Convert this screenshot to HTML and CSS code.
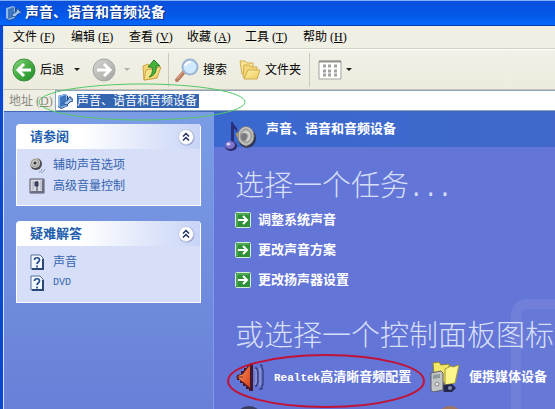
FILE: index.html
```html
<!DOCTYPE html>
<html lang="zh-CN">
<head>
  <meta charset="UTF-8">
  <meta name="viewport" content="width=device-width, initial-scale=1.0">
  <title>声音、语音和音频设备</title>
  <link rel="stylesheet" href="styles.css">
</head>
<body>
  <!-- shared icons -->
  <svg class="defs" aria-hidden="true">
    <defs>
      <linearGradient id="greenBall" x1="0" y1="0" x2="1" y2="1">
        <stop offset="0" stop-color="#8bd67c"/><stop offset=".5" stop-color="#45ad42"/><stop offset="1" stop-color="#218a2a"/>
      </linearGradient>
      <linearGradient id="greyBall" x1="0" y1="0" x2="1" y2="1">
        <stop offset="0" stop-color="#d6d6d2"/><stop offset="1" stop-color="#a3a3a0"/>
      </linearGradient>
      <linearGradient id="folderFill" x1="0" y1="0" x2="1" y2="1">
        <stop offset="0" stop-color="#fdf3a8"/><stop offset="1" stop-color="#eec95c"/>
      </linearGradient>
      <linearGradient id="orangeCone" x1="0" y1="0" x2="1" y2="1">
        <stop offset="0" stop-color="#ffc092"/><stop offset=".5" stop-color="#e8683a"/><stop offset="1" stop-color="#d4431c"/>
      </linearGradient>
      <radialGradient id="cone">
        <stop offset="0" stop-color="#666"/><stop offset=".4" stop-color="#ddd"/><stop offset=".7" stop-color="#9a9a94"/><stop offset="1" stop-color="#efefe8"/>
      </radialGradient>
    </defs>
    <symbol id="device" viewBox="0 0 16 16">
      <path d="M1 3l7-2 3 2v10l-7 3-3-2z" fill="#1f4a8c"/>
      <path d="M1 3l7-2 2 1v11l-6 2-3-2z" fill="#8fb9ea"/>
      <path d="M3 4l6-2v10l-6 2z" fill="#3f78c0"/>
      <path d="M7 9l4-2 1-3 2 0v2h2v2l-3 1-3 3-3-1z" fill="#9fc3ec" stroke="#2a5694"/>
    </symbol>
    <symbol id="go" viewBox="0 0 16 16">
      <rect x=".5" y=".5" width="15" height="15" rx="1" fill="#2f9038" stroke="#d2efd8"/>
      <path d="M2 14V2h12" fill="none" stroke="#6fbe70"/>
      <path d="M3 8h9M8 4l4 4-4 4" fill="none" stroke="#fff" stroke-width="2"/>
    </symbol>
    <symbol id="help" viewBox="0 0 14 16">
      <path d="M1 1h9l3 3v11H1z" fill="#f3f8ff" stroke="#536e98"/>
      <path d="M13 5v10H2" fill="none" stroke="#2c4878" stroke-width="2"/>
      <path d="M4.500 6c0-3 5-3 5 0 0 2-2.500 2-2.500 4M7 11.500v2" fill="none" stroke="#234b8c" stroke-width="1.700"/>
    </symbol>
    <symbol id="collapse" viewBox="0 0 18 18">
      <circle cx="9.500" cy="9.500" r="8" fill="#8d9cc6"/>
      <circle cx="9" cy="9" r="7.500" fill="#fff" stroke="#c3cce6"/>
      <path d="M6 8.500l3-3 3 3M6 12.500l3-3 3 3" fill="none" stroke="#1f2f5c" stroke-width="1.500"/>
    </symbol>
  </svg>

  <header class="titlebar">
    <svg class="icon16"><use href="#device"/></svg>
    <h1>声音、语音和音频设备</h1>
  </header>

  <div class="window">
    <nav class="menubar">
      <button>文件<span>(<u>F</u>)</span></button>
      <button>编辑<span>(<u>E</u>)</span></button>
      <button>查看<span>(<u>V</u>)</span></button>
      <button>收藏<span>(<u>A</u>)</span></button>
      <button>工具<span>(<u>T</u>)</span></button>
      <button>帮助<span>(<u>H</u>)</span></button>
    </nav>

    <div class="toolbar">
      <button class="back">
        <svg width="24" height="24" viewBox="0 0 24 24">
          <circle cx="12" cy="12" r="11" fill="url(#greenBall)" stroke="#3b8f40"/>
          <path d="M19 12H7M12 6l-6 6 6 6" fill="none" stroke="#fff" stroke-width="3"/>
        </svg>
        后退
        <i class="caret"></i>
      </button>
      <button class="forward" aria-label="前进" disabled>
        <svg width="24" height="24" viewBox="0 0 24 24">
          <circle cx="12" cy="12" r="11" fill="url(#greyBall)" stroke="#a5a5a2"/>
          <path d="M5 12h12M12 6l6 6-6 6" fill="none" stroke="#fff" stroke-width="3"/>
        </svg>
        <i class="caret"></i>
      </button>
      <button class="up" aria-label="向上">
        <svg width="20" height="24" viewBox="0 0 20 24">
          <path d="M1 8l5-2 2 2 7-1v13L2 22z" fill="#f3d774" stroke="#cda544"/>
          <path d="M4 12l15-3-4 11-13 2z" fill="url(#folderFill)" stroke="#cda544"/>
          <path d="M7 19c3-2 4-5 3-10H6l6-7 6 6h-4c1 6-2 10-7 11z" fill="#46b33c" stroke="#237f27"/>
        </svg>
      </button>
      <span class="sep"></span>
      <button class="search">
        <svg width="24" height="24" viewBox="0 0 24 24">
          <path d="M2 22l7-8" stroke="#b9795c" stroke-width="4" stroke-linecap="round"/>
          <path d="M2 21l6-7" stroke="#e6b79e" stroke-width="1"/>
          <circle cx="15" cy="9" r="7.500" fill="#cfeafc" stroke="#9db4d2" stroke-width="2"/>
          <path d="M10 8c1-3 4-4 6-4" fill="none" stroke="#fff" stroke-width="2"/>
        </svg>
        搜索
      </button>
      <button class="folders">
        <svg width="22" height="22" viewBox="0 0 22 22">
          <path d="M1 2h5l2 2h6v11H3z" fill="#f9e596" stroke="#d1ab4c"/>
          <path d="M4 18l1-12h5l2 2h6v11H6z" fill="#f4d778" stroke="#d1ab4c"/>
          <path d="M5 20l4-9h12l-3 9z" fill="url(#folderFill)" stroke="#d1ab4c"/>
        </svg>
        文件夹
      </button>
      <span class="sep"></span>
      <button class="views" aria-label="查看方式">
        <svg width="24" height="20" viewBox="0 0 24 20">
          <path d="M1 1h22v18H1z" fill="#fff" stroke="#a4a49c"/>
          <path d="M1 1.500h22" stroke="#93938c" stroke-width="2"/>
          <path d="M5 6h3M10 6h3M16 6h3M5 11h3M10 11h3M16 11h3M5 15h3M10 15h3M16 15h3" stroke="#a2a39e" stroke-width="3"/>
        </svg>
        <i class="caret"></i>
      </button>
    </div>

    <div class="addressbar">
      <label for="address">地址<span>(<u>D</u>)</span></label>
      <div class="address-box">
        <svg class="icon16"><use href="#device"/></svg>
        <input id="address" type="text" value="声音、语音和音频设备">
      </div>
      <svg class="mark mark-green" viewBox="0 0 208 38"><ellipse cx="104" cy="19" rx="103" ry="18"/></svg>
    </div>

    <div class="content">
      <aside class="sidebar">
        <section class="panel">
          <div class="panel-head">
            <h2>请参阅</h2>
            <button aria-label="折叠"><svg width="18" height="18"><use href="#collapse"/></svg></button>
          </div>
          <ul>
            <li><a href="#">
              <svg class="icon16" viewBox="0 0 16 16">
                <ellipse cx="7" cy="7" rx="6" ry="6" fill="#4c4c50"/>
                <ellipse cx="6" cy="6" rx="5" ry="5" fill="url(#cone)"/>
                <circle cx="6" cy="6" r="1.500" fill="#333"/>
                <path d="M10 15c2 0 3-2 3-3M12 16c2 0 3-2 4-4" fill="none" stroke="#8795b6"/>
              </svg>
              辅助声音选项</a></li>
            <li><a href="#">
              <svg class="icon16" viewBox="0 0 16 16">
                <path d="M1 1h14v14H1z" fill="#d9d9e2" stroke="#4e5368"/>
                <path d="M14 2v12H2" fill="none" stroke="#6d6d80" stroke-width="2"/>
                <path d="M4 3v9M12 3v9" stroke="#a9acbc"/>
                <path d="M8 3v10M6 4h3v4H6z" fill="#474d68" stroke="#333a58"/>
              </svg>
              高级音量控制</a></li>
          </ul>
        </section>

        <section class="panel">
          <div class="panel-head">
            <h2>疑难解答</h2>
            <button aria-label="折叠"><svg width="18" height="18"><use href="#collapse"/></svg></button>
          </div>
          <ul>
            <li><a href="#"><svg class="icon16"><use href="#help"/></svg>声音</a></li>
            <li><a href="#"><svg class="icon16"><use href="#help"/></svg><span class="latin">DVD</span></a></li>
          </ul>
        </section>
      </aside>

      <main>
        <div class="category">
          <svg width="32" height="32" viewBox="0 0 32 32">
            <ellipse cx="23" cy="17" rx="9" ry="10" fill="#2f3552"/>
            <path d="M12 13l7-6 4 19-8-5z" fill="#dba63e"/>
            <ellipse cx="22" cy="15" rx="8" ry="9.500" fill="url(#cone)" stroke="#77797f"/>
            <ellipse cx="20" cy="16" rx="3" ry="4" fill="#7b7c80"/>
            <path d="M9 1c1 5 6 5 4 11-1-4-3-4-3-4v15H7V1z" fill="#28307c"/>
            <ellipse cx="7" cy="25" rx="6" ry="5" fill="#2c2a66"/>
            <ellipse cx="6" cy="24" rx="5" ry="4" fill="#7b72cf"/>
            <ellipse cx="4.500" cy="23" rx="2" ry="1.500" fill="#d7d3fb"/>
          </svg>
          <h2>声音、语音和音频设备</h2>
        </div>

        <div class="tasks">
          <h3>选择一个任务<span>...</span></h3>
          <ul>
            <li><a href="#"><svg class="icon16"><use href="#go"/></svg>调整系统声音</a></li>
            <li><a href="#"><svg class="icon16"><use href="#go"/></svg>更改声音方案</a></li>
            <li><a href="#"><svg class="icon16"><use href="#go"/></svg>更改扬声器设置</a></li>
          </ul>

          <h3>或选择一个控制面板图标</h3>
          <div class="applets">
            <a href="#">
              <svg width="30" height="30" viewBox="0 0 30 30">
                <path d="M2 13l4-1V9h3V6h3V3h3V1h3v28h-4v-2h-3v-3H8v-3H5v-3H2z" fill="#43182c"/>
                <path d="M3 14l5-2 7-9v23l-7-6-4-3z" fill="url(#orangeCone)"/>
                <path d="M1 15h7M8 20l7 6" stroke="#7a2a22"/>
                <path d="M20 6h2v3h1v12h-1v3h-2M25 3h2v4h1v16h-1v4h-3" fill="none" stroke="#262a5a"/>
                <path d="M19 8h2v14h-2M25 6v18" fill="none" stroke="#a9a3c8"/>
              </svg>
              <span><span class="latin">Realtek</span>高清晰音频配置</span>
              <svg class="mark mark-red" viewBox="0 0 198 54"><ellipse cx="99" cy="27" rx="98" ry="26"/></svg>
            </a>
            <a href="#">
              <svg width="30" height="32" viewBox="0 0 30 32">
                <path d="M3 2l6-1 2 3 8-1 1 17-15 4z" fill="#f3e768" stroke="#8e8534"/>
                <path d="M15 8l6-3 2 1 6-2-4 18-10 2z" fill="#fbf58b" stroke="#a39932"/>
                <path d="M12 24l10-1 4 4-4 4h-8z" fill="#25284d"/>
                <circle cx="20" cy="27" r="2" fill="#858bb0"/>
                <path d="M1 12l10-2 2 2v17l-10 2-2-2z" fill="#c3c5c6" stroke="#5c5e64"/>
                <path d="M3 14l7-1v4l-7 1z" fill="#8c9b98"/>
                <circle cx="7" cy="23" r="2" fill="#ececec" stroke="#85868a"/>
              </svg>
              <span>便携媒体设备</span>
            </a>
            <svg width="32" height="32" viewBox="0 0 32 32"><circle cx="14" cy="15" r="14" fill="#3a3d62"/></svg>
            <svg width="32" height="32" viewBox="0 0 32 32"><circle cx="20" cy="15" r="14" fill="#a0755f"/></svg>
          </div>
        </div>
        <div class="watermark"></div>
      </main>
    </div>
  </div>
</body>
</html>
```
FILE: styles.css
```css
* {
  margin: 0;
  padding: 0;
  box-sizing: border-box;
}

body {
  display: flex;
  flex-direction: column;
  height: 100vh;
  overflow: hidden;
  background: #0a48cf;
  font-family: "Liberation Serif", "Noto Sans CJK SC", sans-serif;
  font-size: 12px;
  line-height: 16px;
  color: #000;
}

button {
  display: flex;
  align-items: center;
  border: none;
  background: none;
  font: inherit;
  color: inherit;
}

ul {
  list-style: none;
}

a {
  color: inherit;
  text-decoration: none;
}

svg {
  display: block;
  flex: none;
}

.defs {
  position: absolute;
  width: 0;
  height: 0;
}

.icon16 {
  width: 16px;
  height: 16px;
}

.latin {
  font-family: "Liberation Mono", monospace;
  font-size: 10px;
}

/* Title bar */
.titlebar {
  display: flex;
  align-items: center;
  gap: 4px;
  height: 26px;
  flex: none;
  padding: 0 5px;
  border-top: 1px solid #7fb0f5;
  border-bottom: 1px solid #0a3fb4;
  background: linear-gradient(#0a50dc, #0558e8 60%, #0468fc);
}

.titlebar h1 {
  font-size: 14px;
  line-height: 20px;
  color: #fff;
  text-shadow: 1px 1px 1px #0a2f86;
}

.window {
  display: flex;
  flex-direction: column;
  flex: 1;
  min-height: 0;
  margin-left: 3px;
  border-left: 1px solid #d5e3f8;
}

/* Menu */
.menubar {
  display: flex;
  flex: none;
  height: 23px;
  padding-left: 9px;
  background: #f0efe4;
  border-bottom: 1px solid #d2cfc0;
}

.menubar button {
  width: 58px;
}

.menubar span,
.addressbar span {
  margin-left: 3px;
}

/* Buttons */
.toolbar {
  display: flex;
  align-items: center;
  flex: none;
  height: 41px;
  padding-left: 8px;
  background: linear-gradient(#f2f1e8, #ecebdd);
  border-top: 1px solid #fff;
  border-bottom: 1px solid #c4c2b4;
}

.toolbar button {
  height: 32px;
  gap: 4px;
}

.caret {
  border: 3px solid transparent;
  border-top-color: #222;
  border-bottom: none;
}

.back .caret {
  margin-left: 6px;
}

.toolbar .forward {
  margin-left: 12px;
  gap: 8px;
}

.forward .caret {
  border-top-color: #b4b2a8;
}

.up {
  margin-left: 12px;
}

.sep {
  width: 1px;
  height: 34px;
  margin: 0 8px;
  background: #cbc9bb;
}

.up + .sep {
  margin: 0 6px;
}

.folders {
  margin-left: 12px;
}

/* Address */
.addressbar {
  position: relative;
  display: flex;
  align-items: center;
  flex: none;
  height: 22px;
  padding-left: 5px;
  background: #efeee4;
  border-bottom: 1px solid #4168b8;
}

.addressbar label {
  width: 46px;
  color: #8a887d;
}

.address-box {
  display: flex;
  align-items: center;
  flex: 1;
  height: 21px;
  gap: 4px;
  padding-left: 1px;
  background: #fff;
  border: 1px solid #8ea4bc;
  border-right: none;
}

.address-box input {
  width: 122px;
  height: 14px;
  border: none;
  outline: none;
  background: #3465b0;
  color: #fff;
  font: inherit;
  line-height: 14px;
}

/* Ellipses drawn over the window */
.mark {
  position: absolute;
  z-index: 2;
  fill: none;
  pointer-events: none;
}

.mark-green {
  top: -7px;
  left: 34px;
  width: 208px;
  height: 38px;
  stroke: #52c968;
}

.mark-red {
  top: -7px;
  left: -8px;
  width: 198px;
  height: 54px;
  stroke: #c01338;
  stroke-width: 2;
}

.content {
  display: flex;
  flex: 1;
  min-height: 0;
}

/* Left column */
.sidebar {
  display: flex;
  flex-direction: column;
  gap: 15px;
  width: 210px;
  flex: none;
  padding: 12px 12px 0;
  background: linear-gradient(#7a9de5, #6980d8);
  border-right: 1px solid #8099ee;
}

.panel {
  height: 82px;
  background: #d6dff7;
  border: 1px solid #fff;
  border-top: none;
  border-radius: 4px 4px 0 0;
}

.panel-head {
  display: flex;
  align-items: center;
  justify-content: space-between;
  height: 25px;
  padding: 0 5px 0 13px;
  border-radius: 4px 4px 0 0;
  background: linear-gradient(90deg, #fff 35%, #c8d4f7);
}

.panel-head h2 {
  font-size: 13px;
  color: #215dad;
}

.panel ul {
  padding: 5px 12px;
}

.panel a {
  display: flex;
  align-items: center;
  gap: 8px;
  height: 21px;
  color: #3563b0;
}

/* Right side */
main {
  position: relative;
  flex: 1;
  min-width: 0;
  overflow: hidden;
  background: #6375d6;
  color: #fff;
}

.category {
  display: flex;
  gap: 10px;
  height: 35px;
  padding: 9px 10px 0;
  background: linear-gradient(90deg, #3a68cf, #4069cb);
}

.category h2 {
  font-size: 13px;
}

.tasks {
  padding: 20px 0 0 21px;
}

.tasks h3 {
  height: 38px;
  font-size: 29px;
  font-weight: 300;
  line-height: 38px;
  white-space: nowrap;
  color: #d6dff7;
}

.tasks h3 span {
  font-family: "Liberation Mono", monospace;
  font-size: 24px;
}

.tasks ul {
  margin-bottom: 22px;
}

.tasks li a {
  display: flex;
  align-items: center;
  gap: 7px;
  height: 30px;
  font-size: 13px;
  font-weight: bold;
}

.applets {
  display: grid;
  grid-template-columns: 195px 1fr;
  row-gap: 12px;
  margin-top: 6px;
}

.applets a {
  position: relative;
  display: flex;
  align-items: center;
  gap: 9px;
  height: 32px;
  font-size: 13px;
  font-weight: bold;
  white-space: nowrap;
}

.applets .latin {
  font-size: 11px;
}

/* Faint rounded shape in the lower corner */
.watermark {
  position: absolute;
  right: -60px;
  bottom: -80px;
  width: 104px;
  height: 190px;
  border: 10px solid rgba(255, 255, 255, 0.06);
  border-radius: 16px;
  background: rgba(255, 255, 255, 0.03);
  pointer-events: none;
}
```
